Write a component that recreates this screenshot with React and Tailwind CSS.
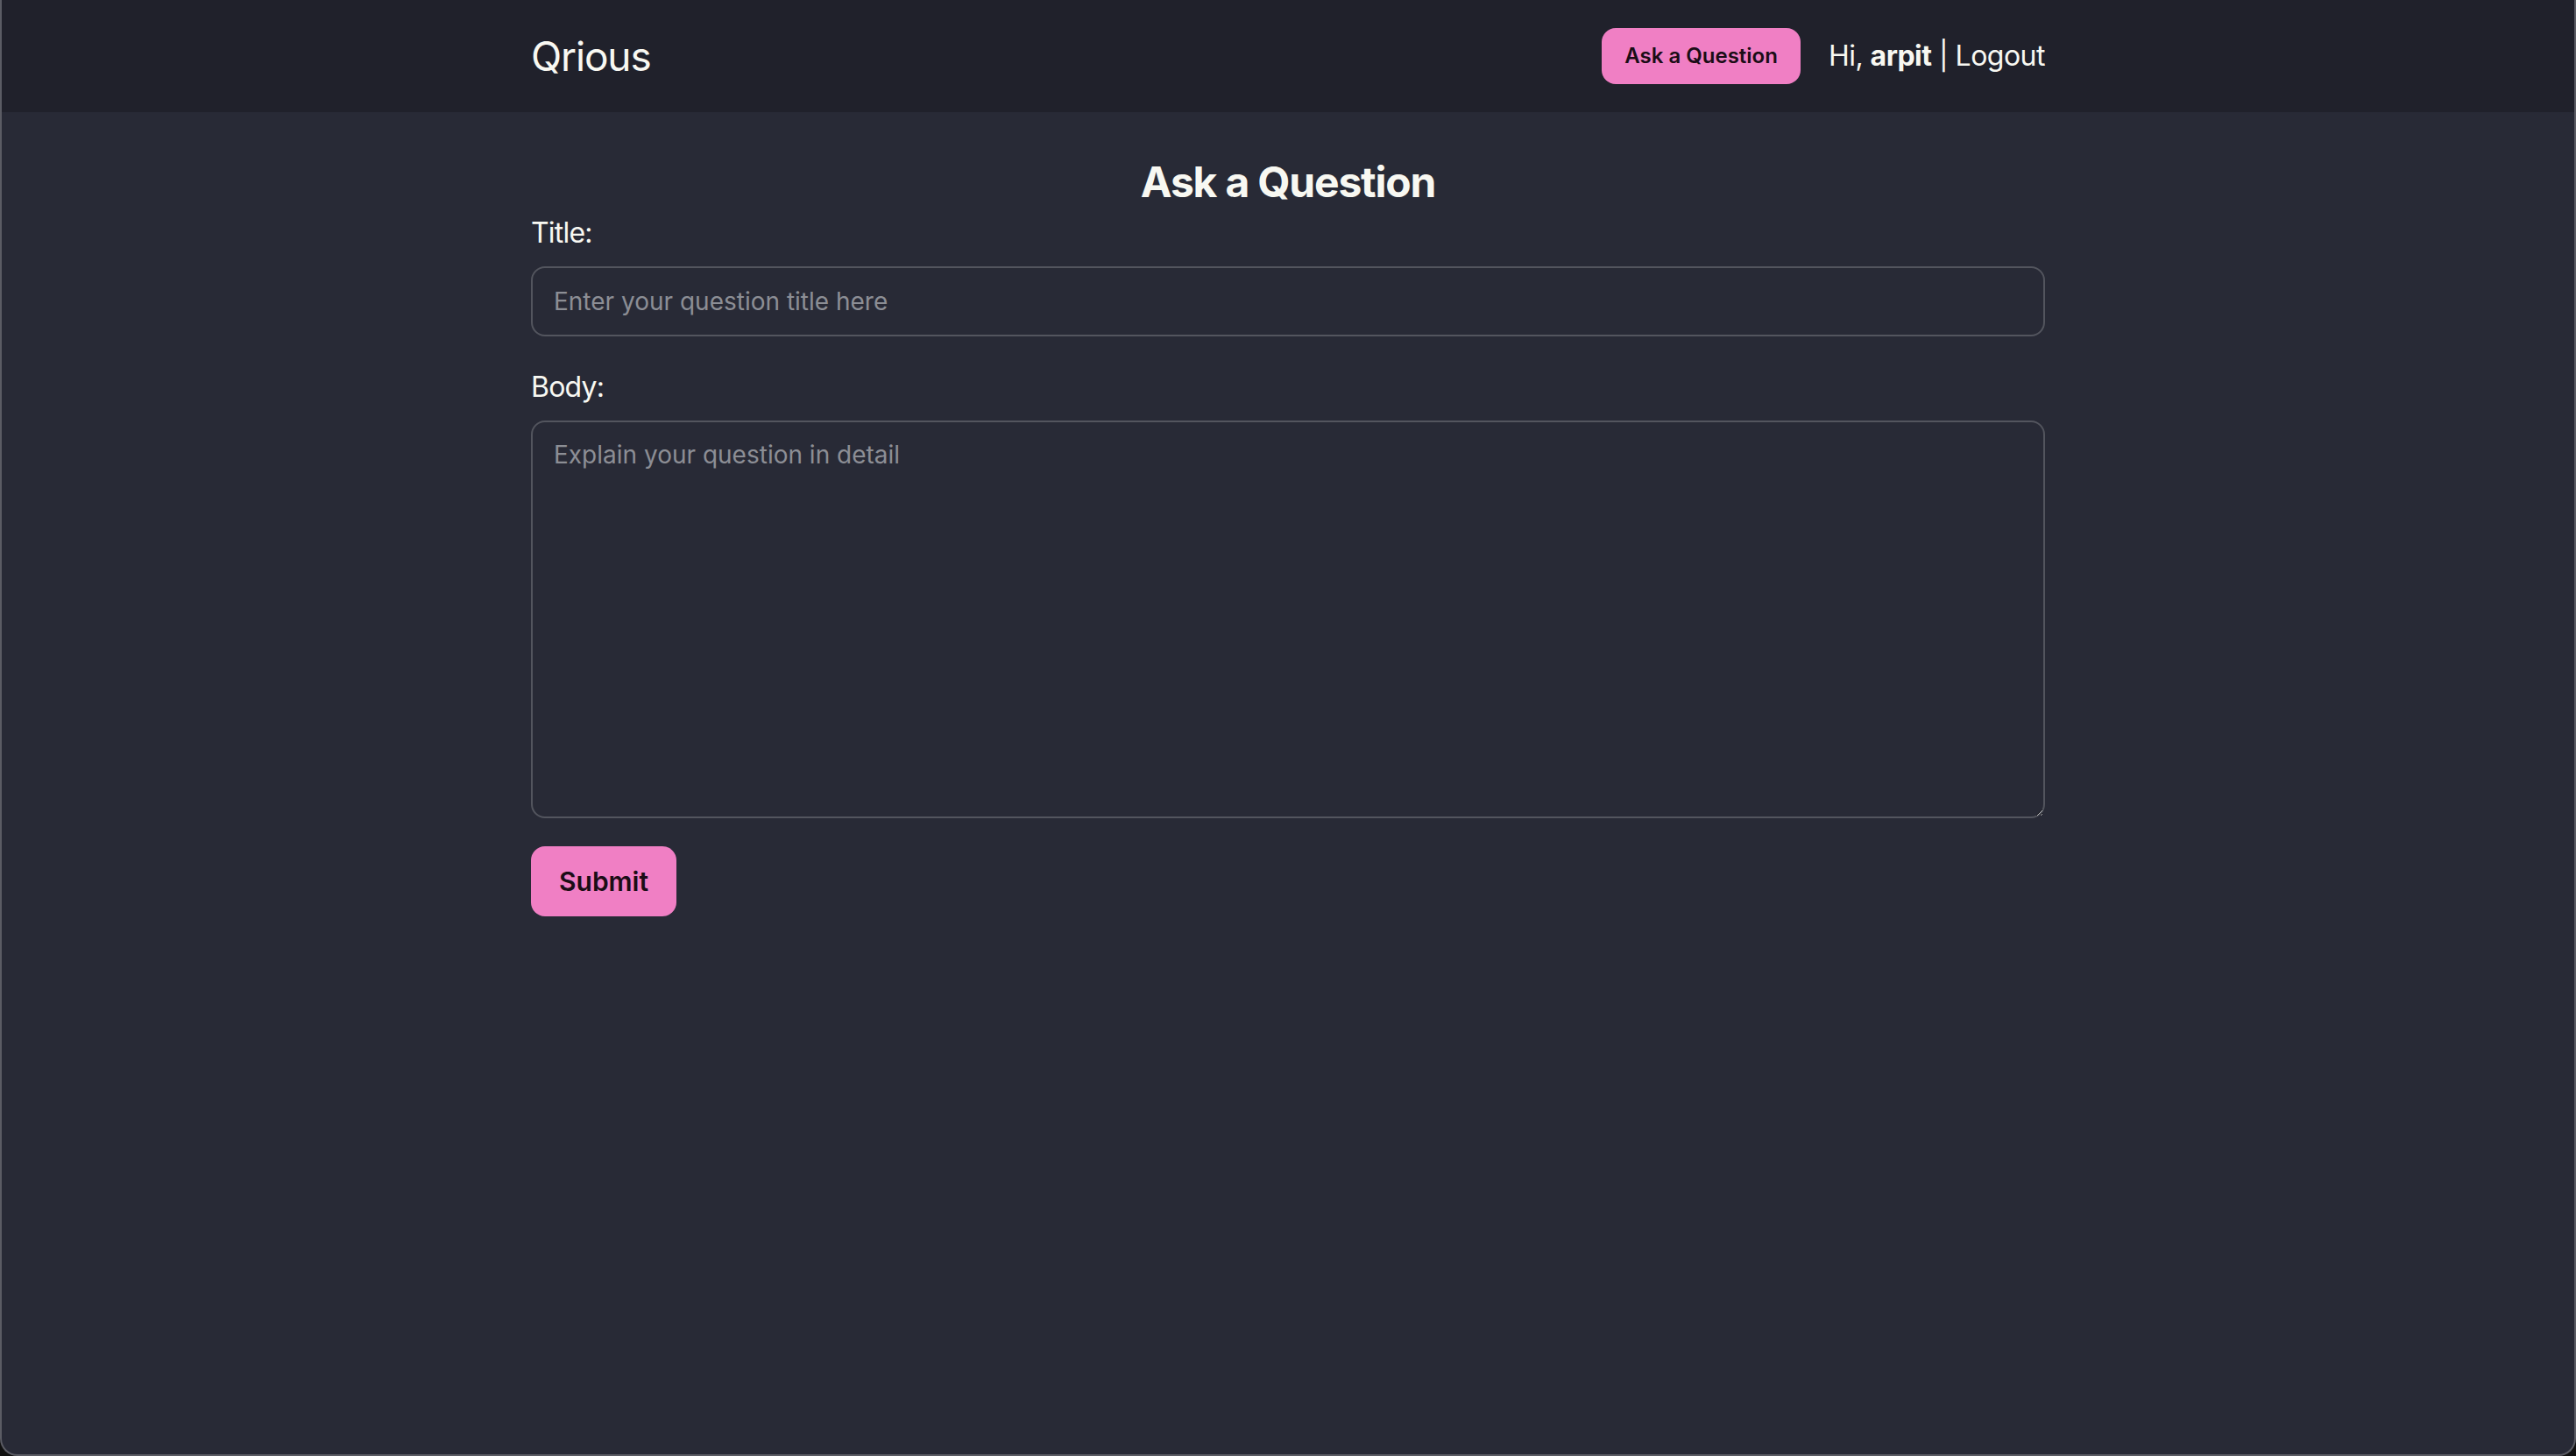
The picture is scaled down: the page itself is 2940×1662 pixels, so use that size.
export default function App() {
  return (
    <div className="h-[1662px] w-[2940px] bg-[#111] font-['Inter',sans-serif]">
      <div className="flex h-full flex-col overflow-hidden rounded-b-[20px] border-x-2 border-b-2 border-[#5b5c64] bg-[#282a36] text-[#f8f8f2]">
        {/* navbar */}
        <header className="h-[128px] shrink-0 bg-[#20212b]">
          <div className="mx-auto flex h-full w-[1728px] items-center justify-between">
            <a className="text-[46px] tracking-tight leading-none">Qrious</a>
            <div className="flex items-center gap-[32px]">
              <button className="h-[64px] rounded-[16px] bg-[#f07fc4] px-[26px] text-[24px] font-semibold text-[#1b0d16]">
                Ask a Question
              </button>
              <span className="text-[32px] tracking-[-0.016em]">
                Hi, <b className="font-bold">arpit</b> | Logout
              </span>
            </div>
          </div>
        </header>

        {/* form */}
        <main className="mx-auto w-[1728px] pt-[48px]">
          <h1 className="text-center text-[48px] font-bold leading-[64px] tracking-tight">
            Ask a Question
          </h1>
          <form className="flex flex-col">
            <label className="mb-[14px] pt-[2px] text-[32px] leading-[48px] tracking-tight">Title:</label>
            <input
              type="text"
              placeholder="Enter your question title here"
              className="mb-[32px] h-[80px] rounded-[16px] border-2 border-[#53555e] bg-transparent px-[24px] text-[28px] outline-none placeholder:text-[#8c8e95]"
            />
            <label className="mb-[14px] pt-[2px] text-[32px] leading-[48px] tracking-tight">Body:</label>
            <textarea
              placeholder="Explain your question in detail"
              className="mb-[32px] h-[454px] rounded-[16px] border-2 border-[#53555e] bg-transparent px-[24px] py-[16px] text-[28px] outline-none placeholder:text-[#8c8e95]"
            />
            <div>
              <button
                type="button"
                className="h-[80px] rounded-[16px] bg-[#f07fc4] px-[32px] text-[30px] font-semibold text-[#1b0d16]"
              >
                Submit
              </button>
            </div>
          </form>
        </main>
      </div>
    </div>
  );
}
